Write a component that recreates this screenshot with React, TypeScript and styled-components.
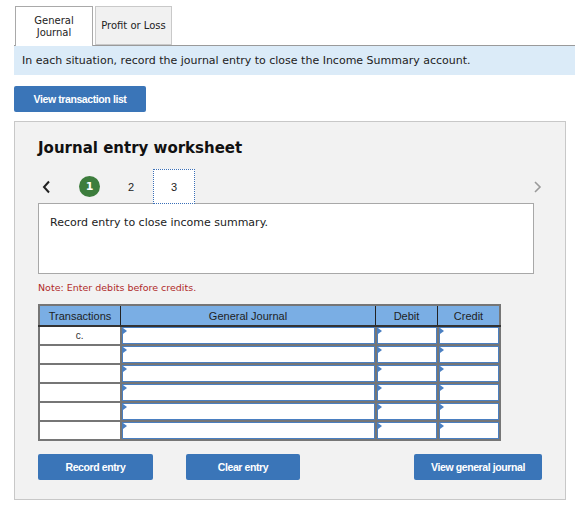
import React from 'react';
import styled, { createGlobalStyle } from 'styled-components';

const blue = '#3a75b8';
const headerBlue = '#7aaee4';
const gridGray = '#767676';
const cellBlue = '#4a7fc1';

const GlobalStyle = createGlobalStyle`
  body {
    margin: 0;
    background: #ffffff;
    font-family: "DejaVu Sans", Verdana, sans-serif;
    color: #222222;
  }
`;

const Page = styled.div`
  padding: 6px 0 0 14px;
  width: 561px;
`;

const TabBar = styled.div`
  display: flex;
  align-items: flex-end;
  gap: 2px;
  padding-left: 1px;
  border-bottom: 1px solid #9a9a9a;
`;

const Tab = styled.div<{ active?: boolean }>`
  width: ${p => (p.active ? 76 : 75)}px;
  height: ${p => (p.active ? 39 : 37)}px;
  display: flex;
  align-items: center;
  justify-content: center;
  text-align: center;
  font-size: 10px;
  line-height: 12px;
  color: #222;
  background: ${p => (p.active ? '#ffffff' : '#f1f1f1')};
  border: 1px solid ${p => (p.active ? '#a9a9a9' : '#c9c9c9')};
  border-bottom: ${p => (p.active ? 'none' : '1px solid #c9c9c9')};
  margin-bottom: ${p => (p.active ? '-1px' : '0')};
`;

const Banner = styled.div`
  background: #dbebf8;
  height: 29px;
  display: flex;
  align-items: center;
  padding-left: 8px;
  font-size: 11px;
`;

const Button = styled.button<{ w: number }>`
  width: ${p => p.w}px;
  height: 26px;
  border: none;
  border-radius: 2px;
  background: ${blue};
  color: #ffffff;
  font-family: "Liberation Sans", Arial, sans-serif;
  font-weight: bold;
  font-size: 10.5px;
  letter-spacing: -0.4px;
  padding: 0;
`;

const TopButton = styled(Button)`
  margin-top: 11px;
  display: block;
`;

const Panel = styled.div`
  margin-top: 9px;
  width: 527px;
  background: #f2f2f2;
  border: 1px solid #c8c8c8;
  padding: 16px 0 19px 23px;
`;

const Title = styled.h2`
  margin: 0;
  font-size: 15px;
  line-height: 20px;
  font-weight: bold;
  color: #111;
`;

const NavRow = styled.div`
  margin-top: 11px;
  width: 505px;
  height: 35px;
  display: flex;
  align-items: center;
  position: relative;
  margin-bottom: -1px;
  z-index: 1;
`;

const Arrow = styled.div<{ left?: boolean }>`
  width: 12px;
  display: flex;
  justify-content: center;
  margin-left: ${p => (p.left ? '2px' : 'auto')};
`;

const StepCircle = styled.div`
  width: 21px;
  height: 21px;
  border-radius: 50%;
  background: #3d7d3d;
  color: #fff;
  font-size: 11px;
  font-weight: bold;
  display: flex;
  align-items: center;
  justify-content: center;
  margin-left: 27px;
`;

const StepNum = styled.div<{ current?: boolean }>`
  width: ${p => (p.current ? 42 : 22)}px;
  height: 35px;
  display: flex;
  align-items: center;
  justify-content: center;
  font-size: 11px;
  font-family: "Liberation Sans", Arial, sans-serif;
  color: #222;
  margin-left: ${p => (p.current ? '11px' : '20px')};
  background: ${p => (p.current ? '#ffffff' : 'transparent')};
  border: ${p => (p.current ? '1px dotted #3a6fb7' : 'none')};
  box-sizing: border-box;
`;

const DescBox = styled.div`
  background: #fff;
  border: 1px solid #a8a8a8;
  padding: 12px 0 0 11px;
  font-size: 11px;
  width: 483px;
  height: 57px;
`;

const Note = styled.div`
  margin-top: 8px;
  font-size: 9.5px;
  color: #b02a2a;
`;

const Table = styled.table`
  margin-top: 11px;
  border-collapse: collapse;
  border: 2px solid ${gridGray};
  font-family: "Liberation Sans", Arial, sans-serif;
  font-size: 11px;
  table-layout: fixed;
`;

const Th = styled.th<{ w: number }>`
  width: ${p => p.w}px;
  height: 19px;
  padding: 0;
  background: ${headerBlue};
  color: #1e1e1e;
  font-weight: normal;
  border-left: 1px solid #222;
  border-bottom: 2px solid #333;
  &:first-child {
    border-left: none;
  }
`;

const Td = styled.td`
  height: 17px;
  padding: 0;
  background: #fff;
  border: 2px solid ${gridGray};
  text-align: center;
  font-size: 10px;
  color: #333;
`;

const InputTd = styled(Td)`
  position: relative;
  box-shadow: inset 0 0 0 1px ${cellBlue};
  &::before {
    content: '';
    position: absolute;
    left: 1px;
    top: 1px;
    border-top: 3px solid transparent;
    border-bottom: 3px solid transparent;
    border-left: 4px solid ${cellBlue};
  }
`;

const ButtonRow = styled.div`
  margin-top: 13px;
  width: 504px;
  display: flex;
  gap: 33px;
`;

const PushRight = styled.div`
  margin-left: auto;
`;

const ChevronLeft = () => (
  <svg width="9" height="14" viewBox="0 0 9 14">
    <polyline points="7,1.5 2,7 7,12.5" fill="none" stroke="#222" strokeWidth="2" />
  </svg>
);

const ChevronRight = () => (
  <svg width="9" height="14" viewBox="0 0 9 14">
    <polyline points="2,2 7,7 2,12" fill="none" stroke="#9a9a9a" strokeWidth="1.6" />
  </svg>
);

const rows = ['c.', '', '', '', '', ''];

export default function App() {
  return (
    <>
      <GlobalStyle />
      <Page>
        <TabBar>
          <Tab active>
            General
            <br />
            Journal
          </Tab>
          <Tab>Profit or Loss</Tab>
        </TabBar>
        <Banner>In each situation, record the journal entry to close the Income Summary account.</Banner>
        <TopButton w={132}>View transaction list</TopButton>
        <Panel>
          <Title>Journal entry worksheet</Title>
          <NavRow>
            <Arrow left>
              <ChevronLeft />
            </Arrow>
            <StepCircle>1</StepCircle>
            <StepNum>2</StepNum>
            <StepNum current>3</StepNum>
            <Arrow>
              <ChevronRight />
            </Arrow>
          </NavRow>
          <DescBox>Record entry to close income summary.</DescBox>
          <Note>Note: Enter debits before credits.</Note>
          <Table>
            <thead>
              <tr>
                <Th w={80}>Transactions</Th>
                <Th w={254}>General Journal</Th>
                <Th w={61}>Debit</Th>
                <Th w={61}>Credit</Th>
              </tr>
            </thead>
            <tbody>
              {rows.map((r, i) => (
                <tr key={i}>
                  <Td>{r}</Td>
                  <InputTd />
                  <InputTd />
                  <InputTd />
                </tr>
              ))}
            </tbody>
          </Table>
          <ButtonRow>
            <Button w={115}>Record entry</Button>
            <Button w={114}>Clear entry</Button>
            <PushRight>
              <Button w={128}>View general journal</Button>
            </PushRight>
          </ButtonRow>
        </Panel>
      </Page>
    </>
  );
}
